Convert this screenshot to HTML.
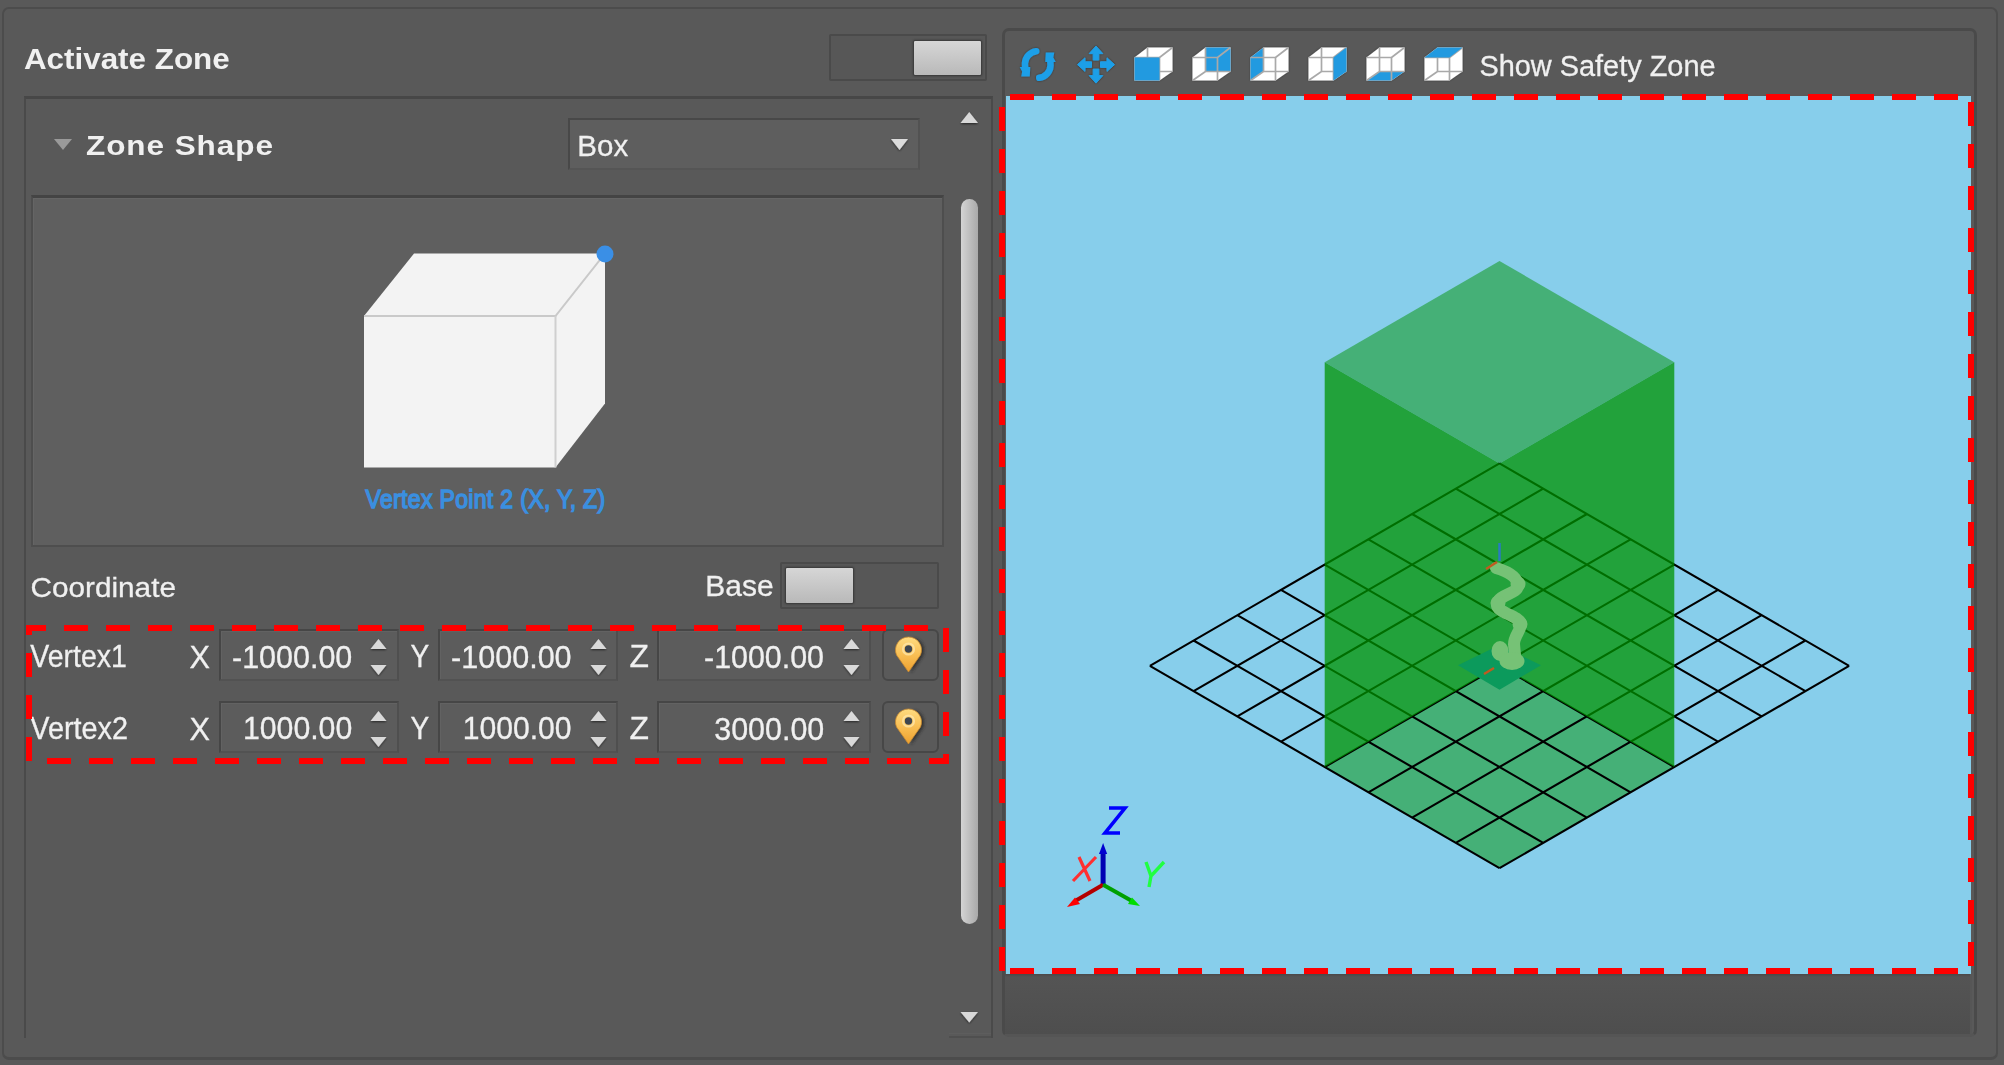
<!DOCTYPE html>
<html><head><meta charset="utf-8">
<style>
*{box-sizing:border-box;margin:0;padding:0}
html,body{width:2004px;height:1065px;overflow:hidden;background:#595959}
body{position:relative;font-family:"Liberation Sans",sans-serif;color:#f2f2f2}
.a{position:absolute}
.t{position:absolute;white-space:nowrap;line-height:1;color:#f0f0f0;-webkit-text-stroke:0.3px #f0f0f0}
.spin{position:absolute;background:#5c5c5c;border:2px solid #464646;border-right-color:#4f4f4f;border-bottom-color:#525252;box-shadow:inset 1px 1px 0 #626262}
.tog{position:absolute;background:#575757;border:2px solid #4a4a4a;border-radius:2px}
.knob{position:absolute;background:linear-gradient(#d6d6d6,#b9b9b9);border:1px solid #3f3f3f;border-radius:2px;box-shadow:0 0 2px #333}
.pinbtn{position:absolute;background:#5a5a5a;border:2px solid #474747;border-radius:6px}
</style></head><body>

<!-- outer groupbox -->
<div class="a" style="left:2px;top:7px;width:1996px;height:1053px;border:2px solid #4c4c4c;border-width:2.5px 2.5px 3px 2.5px;border-radius:7px"></div>

<!-- Activate Zone header -->
<div class="tog" style="left:829px;top:34px;width:158px;height:47px"></div>
<div class="knob" style="left:913px;top:40px;width:69px;height:36px"></div>

<!-- left scroll panel -->
<div class="a" style="left:24px;top:96px;width:969px;height:942px;border:2px solid #4a4a4a;border-top:3px solid #474747;border-bottom:none"></div>

<div class="a" style="left:949px;top:1033px;width:42px;height:5px;border-top:1px solid #5d5d5d;border-bottom:2.5px solid #4f4f4f"></div>
<!-- zone shape row -->
<svg class="a" style="left:0;top:0" width="2004" height="1065">
  <polygon points="54,139 72,139 63,150" fill="#9a9a9a"/>
</svg>
<div class="a" style="left:568px;top:118px;width:352px;height:52px;background:#5e5e5e;border:2px solid #484848;border-right-color:#525252;border-bottom-color:#555"></div>

<!-- image box -->
<div class="a" style="left:31px;top:195px;width:913px;height:352px;background:#5f5f5f;border:2px solid #4e4e4e;border-top:3px solid #444;box-shadow:inset 1px 1px 0 #656565"></div>

<!-- Coordinate row -->
<div class="tog" style="left:780px;top:562px;width:159px;height:47px"></div>
<div class="knob" style="left:785px;top:567px;width:69px;height:37px"></div>

<!-- Vertex rows -->
<div class="spin" style="left:219px;top:629px;width:180px;height:52px"></div>
<div class="spin" style="left:438px;top:629px;width:180px;height:52px"></div>
<div class="spin" style="left:657px;top:629px;width:214px;height:52px"></div>
<div class="pinbtn" style="left:882px;top:629px;width:57px;height:52px"></div>

<div class="spin" style="left:219px;top:701px;width:180px;height:52px"></div>
<div class="spin" style="left:438px;top:701px;width:180px;height:52px"></div>
<div class="spin" style="left:657px;top:701px;width:214px;height:52px"></div>
<div class="pinbtn" style="left:882px;top:701px;width:57px;height:52px"></div>

<!-- right viewport panel -->
<div class="a" style="left:1002px;top:28px;width:975px;height:1009px;border:3px solid #4a4a4a;border-bottom-color:#555;border-radius:7px"></div>
<div class="a" style="left:1005px;top:974px;width:967px;height:60px;background:linear-gradient(#4b4848 0,#545454 3px,#4e4e4e 100%);border-right:2px solid #565656"></div>
<div class="a" style="left:1006px;top:96px;width:965px;height:878px;background:#87ceeb"></div>

<!-- texts -->
<div class="t" style="left:23.92px;top:42.91px;font-size:31.4px;font-weight:bold;-webkit-text-stroke:0;transform-origin:0 26.59px;transform:scaleY(0.955)">Activate Zone</div>
<div class="t" style="left:85.96px;top:128.84px;font-size:31.49px;font-weight:bold;-webkit-text-stroke:0;letter-spacing:0.03em;transform-origin:0 26.66px;transform:scaleY(0.896)">Zone Shape</div>
<div class="t" style="left:577.34px;top:130.81px;font-size:29.51px;transform-origin:0 24.99px;transform:scaleY(1.024)">Box</div>
<div class="t" style="left:1479.4px;top:52.02px;font-size:28.91px;transform-origin:0 24.48px;transform:scaleY(0.99)">Show Safety Zone</div>
<div class="t" style="left:30.41px;top:571.81px;font-size:29.75px;transform-origin:0 25.19px;transform:scaleY(0.953)">Coordinate</div>
<div class="t" style="left:705.3px;top:571.12px;font-size:29.98px;transform-origin:0 25.38px;transform:scaleY(0.955)">Base</div>
<div class="t" style="left:30.36px;top:643.42px;font-size:28.44px;transform-origin:0 24.08px;transform:scaleY(1.118)">Vertex1</div>
<div class="t" style="left:30.36px;top:715.13px;font-size:28.79px;transform-origin:0 24.37px;transform:scaleY(1.089)">Vertex2</div>
<div class="t" style="left:189.53px;top:641.55px;font-size:30.65px;transform-origin:0 25.95px;transform:scaleY(1.028)">X</div>
<div class="t" style="left:410.5px;top:643.74px;font-size:28.06px;transform-origin:0 23.76px;transform:scaleY(1.123)">Y</div>
<div class="t" style="left:629.55px;top:640.56px;font-size:31.82px;transform-origin:0 26.94px;transform:scaleY(0.991)">Z</div>
<div class="t" style="left:189.53px;top:713.55px;font-size:30.65px;transform-origin:0 25.95px;transform:scaleY(1.028)">X</div>
<div class="t" style="left:410.5px;top:715.74px;font-size:28.06px;transform-origin:0 23.76px;transform:scaleY(1.123)">Y</div>
<div class="t" style="left:629.55px;top:712.56px;font-size:31.82px;transform-origin:0 26.94px;transform:scaleY(0.991)">Z</div>
<div class="t" style="left:232.03px;top:641.99px;font-size:30.48px;transform-origin:0 25.81px;transform:scaleY(1.033)">-1000.00</div>
<div class="t" style="left:451.02px;top:641.93px;font-size:30.56px;transform-origin:0 25.87px;transform:scaleY(1.031)">-1000.00</div>
<div class="t" style="left:704.03px;top:642.08px;font-size:30.38px;transform-origin:0 25.72px;transform:scaleY(1.037)">-1000.00</div>
<div class="t" style="left:242.93px;top:714.18px;font-size:30.26px;transform-origin:0 25.62px;transform:scaleY(1.041)">1000.00</div>
<div class="t" style="left:462.74px;top:714.28px;font-size:30.14px;transform-origin:0 25.52px;transform:scaleY(1.045)">1000.00</div>
<div class="t" style="left:714.28px;top:714.03px;font-size:30.44px;transform-origin:0 25.77px;transform:scaleY(1.035)">3000.00</div>
<svg id="gfx" class="a" style="left:0;top:0" width="2004" height="1065">
<polygon points="364,316 414,253.5 605,253.5 605,403.5 555.5,467.5 364,467.5" fill="#f3f3f3"/>
<polyline points="364,316 555.5,316 605,253.5" fill="none" stroke="#c9c9c9" stroke-width="2"/>
<line x1="555.5" y1="316" x2="555.5" y2="467.5" stroke="#cfcfcf" stroke-width="2"/>
<circle cx="605" cy="254" r="8.5" fill="#3a8fe6"/>
<text transform="translate(365.5,507.5) scale(1,1.1)" x="0" y="0" font-family="Liberation Sans" font-size="23" letter-spacing="0.35" fill="#3a8fe0" stroke="#3a8fe0" stroke-width="1.3">Vertex Point 2 (X, Y, Z)</text>
<defs><linearGradient id="thumb" x1="0" x2="1" y1="0" y2="0"><stop offset="0" stop-color="#d4d4d4"/><stop offset="1" stop-color="#a9a9a9"/></linearGradient><linearGradient id="pin" x1="0" x2="0" y1="0" y2="1"><stop offset="0" stop-color="#ffdc80"/><stop offset="0.55" stop-color="#f8bc50"/><stop offset="1" stop-color="#eca030"/></linearGradient></defs>
<rect x="961" y="199" width="17" height="725" rx="8.5" fill="url(#thumb)"/>
<defs><filter id="ash" x="-50%" y="-50%" width="200%" height="200%"><feGaussianBlur in="SourceAlpha" stdDeviation="1"/><feOffset dy="1"/><feComponentTransfer><feFuncA type="linear" slope="0.6"/></feComponentTransfer><feMerge><feMergeNode/><feMergeNode in="SourceGraphic"/></feMerge></filter></defs>
<polygon points="960.5,123 978,123 969.25,112" fill="#d8d8d8" filter="url(#ash)"/>
<polygon points="960.5,1012 978,1012 969.25,1022.5" fill="#d8d8d8" filter="url(#ash)"/>
<polygon points="891,139 908,139 899.5,150" fill="#dcdcdc" filter="url(#ash)"/>
<defs><filter id="blr" x="-50%" y="-50%" width="200%" height="200%"><feGaussianBlur stdDeviation="1.8"/></filter></defs>
<g filter="url(#ash)"><polygon points="370.5,649 386.5,649 378.5,639" fill="#d9d9d9"/><polygon points="370.5,665 386.5,665 378.5,675" fill="#d9d9d9"/></g>
<g filter="url(#ash)"><polygon points="590.5,649 606.5,649 598.5,639" fill="#d9d9d9"/><polygon points="590.5,665 606.5,665 598.5,675" fill="#d9d9d9"/></g>
<g filter="url(#ash)"><polygon points="843.5,649 859.5,649 851.5,639" fill="#d9d9d9"/><polygon points="843.5,665 859.5,665 851.5,675" fill="#d9d9d9"/></g>
<path d="M911.0,673 L923.0,656 A13,13 0 0 0 914.5,638 Z" fill="#222" opacity="0.7" filter="url(#blr)"/>
<path d="M908.5,672 L896.5,655 A13,13 0 1 1 920.5,655 Z" fill="url(#pin)" stroke="#c98a30" stroke-width="0.8"/>
<circle cx="908.5" cy="649" r="5.6" fill="none" stroke="#ffeab0" stroke-width="2" opacity="0.7"/>
<circle cx="908.5" cy="649" r="3.7" fill="#3e4650"/>
<g filter="url(#ash)"><polygon points="370.5,721 386.5,721 378.5,711" fill="#d9d9d9"/><polygon points="370.5,737 386.5,737 378.5,747" fill="#d9d9d9"/></g>
<g filter="url(#ash)"><polygon points="590.5,721 606.5,721 598.5,711" fill="#d9d9d9"/><polygon points="590.5,737 606.5,737 598.5,747" fill="#d9d9d9"/></g>
<g filter="url(#ash)"><polygon points="843.5,721 859.5,721 851.5,711" fill="#d9d9d9"/><polygon points="843.5,737 859.5,737 851.5,747" fill="#d9d9d9"/></g>
<path d="M911.0,745 L923.0,728 A13,13 0 0 0 914.5,710 Z" fill="#222" opacity="0.7" filter="url(#blr)"/>
<path d="M908.5,744 L896.5,727 A13,13 0 1 1 920.5,727 Z" fill="url(#pin)" stroke="#c98a30" stroke-width="0.8"/>
<circle cx="908.5" cy="721" r="5.6" fill="none" stroke="#ffeab0" stroke-width="2" opacity="0.7"/>
<circle cx="908.5" cy="721" r="3.7" fill="#3e4650"/>
<polygon points="1324.7,362.2 1499.5,261.0 1674.3,362.2 1499.5,463.4" fill="#45b077"/>
<polygon points="1324.7,767.0 1499.5,868.2 1674.3,767.0 1499.5,665.8" fill="#45b077"/>
<path d="M1149.9,665.8L1499.5,868.2M1149.9,665.8L1499.5,463.4M1193.6,640.5L1543.2,842.9M1193.6,691.1L1543.2,488.7M1237.3,615.2L1586.9,817.6M1237.3,716.4L1586.9,514.0M1281.0,589.9L1630.6,792.3M1281.0,741.7L1630.6,539.3M1324.7,564.6L1674.3,767.0M1324.7,767.0L1674.3,564.6M1368.4,539.3L1718.0,741.7M1368.4,792.3L1718.0,589.9M1412.1,514.0L1761.7,716.4M1412.1,817.6L1761.7,615.2M1455.8,488.7L1805.4,691.1M1455.8,842.9L1805.4,640.5M1499.5,463.4L1849.1,665.8M1499.5,868.2L1849.1,665.8" stroke="#000" stroke-width="2.1" fill="none"/>
<polygon points="1324.7,362.2 1499.5,463.4 1674.3,362.2 1674.3,767.0 1499.5,665.8 1324.7,767.0" fill="#009300" fill-opacity="0.75"/>
<polygon points="1458,665.3 1499.5,645 1541,665.3 1499.5,689.7" fill="#0c9a5c"/>
<path d="M1496,568 C1506,571 1518,576 1518,586 C1517,594 1499,594 1497,604 C1496,613 1519,615 1521,624 C1521,630 1514,636 1514,644 L1515,655" fill="none" stroke="#76c276" stroke-width="12" stroke-linecap="round" stroke-linejoin="round"/>
<circle cx="1518" cy="584" r="7.5" fill="#76c276"/>
<circle cx="1498" cy="603" r="7.5" fill="#76c276"/>
<circle cx="1520" cy="624" r="7.5" fill="#76c276"/>
<ellipse cx="1500" cy="651" rx="8.5" ry="10" fill="#76c276"/>
<ellipse cx="1512" cy="661" rx="12.5" ry="9" fill="#76c276"/>
<line x1="1499.5" y1="543" x2="1499.5" y2="561" stroke="#2a7ac0" stroke-width="2.5"/>
<line x1="1486" y1="569" x2="1497" y2="562" stroke="#c05a20" stroke-width="2.5"/>
<line x1="1484" y1="674" x2="1494" y2="668" stroke="#c05a20" stroke-width="2.5"/>
<line x1="1103.1" y1="884.7" x2="1103.1" y2="852" stroke="#0000b4" stroke-width="5"/>
<polygon points="1099,854 1107.2,854 1103.1,843" fill="#0000d0"/>
<line x1="1103.1" y1="884.7" x2="1076" y2="900.5" stroke="#b40000" stroke-width="4"/>
<polygon points="1067,907 1075,897.5 1080,904" fill="#ff0000"/>
<line x1="1103.1" y1="884.7" x2="1131" y2="900.5" stroke="#00a000" stroke-width="4"/>
<polygon points="1140,906 1128,904 1132,897.5" fill="#00dd00"/>
<path d="M1109,808 L1125,808 L1105,833 L1120,833" fill="none" stroke="#0000ff" stroke-width="3.6" stroke-linejoin="miter"/>
<path d="M1079,857 L1090,881 M1096,857 L1073,881" fill="none" stroke="#ff3030" stroke-width="3.2"/>
<path d="M1146,862 L1151,876 L1164,862 M1151,876 L1149,887" fill="none" stroke="#20ff40" stroke-width="3.4"/>
<defs><filter id="ish" x="-30%" y="-30%" width="160%" height="160%"><feGaussianBlur in="SourceAlpha" stdDeviation="1.2"/><feComponentTransfer><feFuncA type="linear" slope="0.45"/></feComponentTransfer><feMerge><feMergeNode/><feMergeNode in="SourceGraphic"/></feMerge></filter></defs>
<g filter="url(#ish)"><g transform="rotate(0 1037.75 64.5) translate(1037.75 64.5)"><path d="M-1.5,-13.3 A13,13 0 0 0 -12.8,-1 L-12.6,3" fill="none" stroke="#1e9fe8" stroke-width="6.5" stroke-linecap="round"/><polygon points="-18,2.5 -7.5,2.5 -8,12 -16.5,12 -15.6,7" fill="#1e9fe8"/></g><g transform="rotate(180 1037.75 64.5) translate(1037.75 64.5)"><path d="M-1.5,-13.3 A13,13 0 0 0 -12.8,-1 L-12.6,3" fill="none" stroke="#1e9fe8" stroke-width="6.5" stroke-linecap="round"/><polygon points="-18,2.5 -7.5,2.5 -8,12 -16.5,12 -15.6,7" fill="#1e9fe8"/></g></g>
<g filter="url(#ish)"><path d="M1096,46.099999999999994 l6.8,7.5 h-4 v6.5 h-5.6 v-6.5 h-4 z M1096,83.1 l6.8,-7.5 h-4 v-6.5 h-5.6 v6.5 h-4 z M1077.5,64.6 l7.5,6.8 v-4 h6.5 v-5.6 h-6.5 v-4 z M1114.5,64.6 l-7.5,6.8 v-4 h-6.5 v-5.6 h6.5 v-4 z" fill="#1e9fe8" stroke="#1e9fe8" stroke-width="1" stroke-linejoin="round"/></g>
<polygon points="1134.5,57.5 1147.5,47.5 1172.5,47.5 1172.5,71.5 1159.5,80.5 1134.5,80.5" fill="#ffffff" filter="url(#ish)"/><path d="M1134.5,57.5L1159.5,57.5 M1159.5,57.5L1159.5,80.5 M1147.5,47.5L1147.5,71.5 M1147.5,71.5L1172.5,71.5 M1159.5,57.5L1172.5,47.5 M1134.5,80.5L1147.5,71.5" fill="none" stroke="#a9a9a9" stroke-width="1.7"/><polygon points="1134.5,57.5 1159.5,57.5 1159.5,80.5 1134.5,80.5" fill="#229ae0"/>
<polygon points="1192.5,57.5 1205.5,47.5 1230.5,47.5 1230.5,71.5 1217.5,80.5 1192.5,80.5" fill="#ffffff" filter="url(#ish)"/><polygon points="1205.5,47.5 1230.5,47.5 1230.5,71.5 1205.5,71.5" fill="#229ae0"/><path d="M1192.5,57.5L1217.5,57.5 M1217.5,57.5L1217.5,80.5 M1205.5,47.5L1205.5,71.5 M1205.5,71.5L1230.5,71.5 M1217.5,57.5L1230.5,47.5 M1192.5,80.5L1205.5,71.5" fill="none" stroke="#a9a9a9" stroke-width="1.7"/>
<polygon points="1250.5,57.5 1263.5,47.5 1288.5,47.5 1288.5,71.5 1275.5,80.5 1250.5,80.5" fill="#ffffff" filter="url(#ish)"/><polygon points="1250.5,57.5 1263.5,47.5 1263.5,71.5 1250.5,80.5" fill="#229ae0"/><path d="M1250.5,57.5L1275.5,57.5 M1275.5,57.5L1275.5,80.5 M1263.5,47.5L1263.5,71.5 M1263.5,71.5L1288.5,71.5 M1275.5,57.5L1288.5,47.5 M1250.5,80.5L1263.5,71.5" fill="none" stroke="#a9a9a9" stroke-width="1.7"/>
<polygon points="1308.5,57.5 1321.5,47.5 1346.5,47.5 1346.5,71.5 1333.5,80.5 1308.5,80.5" fill="#ffffff" filter="url(#ish)"/><path d="M1308.5,57.5L1333.5,57.5 M1333.5,57.5L1333.5,80.5 M1321.5,47.5L1321.5,71.5 M1321.5,71.5L1346.5,71.5 M1333.5,57.5L1346.5,47.5 M1308.5,80.5L1321.5,71.5" fill="none" stroke="#a9a9a9" stroke-width="1.7"/><polygon points="1333.5,57.5 1346.5,47.5 1346.5,71.5 1333.5,80.5" fill="#229ae0"/>
<polygon points="1366.5,57.5 1379.5,47.5 1404.5,47.5 1404.5,71.5 1391.5,80.5 1366.5,80.5" fill="#ffffff" filter="url(#ish)"/><polygon points="1366.5,80.5 1391.5,80.5 1404.5,71.5 1379.5,71.5" fill="#229ae0"/><path d="M1366.5,57.5L1391.5,57.5 M1391.5,57.5L1391.5,80.5 M1379.5,47.5L1379.5,71.5 M1379.5,71.5L1404.5,71.5 M1391.5,57.5L1404.5,47.5 M1366.5,80.5L1379.5,71.5" fill="none" stroke="#a9a9a9" stroke-width="1.7"/>
<polygon points="1424.5,57.5 1437.5,47.5 1462.5,47.5 1462.5,71.5 1449.5,80.5 1424.5,80.5" fill="#ffffff" filter="url(#ish)"/><path d="M1424.5,57.5L1449.5,57.5 M1449.5,57.5L1449.5,80.5 M1437.5,47.5L1437.5,71.5 M1437.5,71.5L1462.5,71.5 M1449.5,57.5L1462.5,47.5 M1424.5,80.5L1437.5,71.5" fill="none" stroke="#a9a9a9" stroke-width="1.7"/><polygon points="1424.5,57.5 1449.5,57.5 1462.5,47.5 1437.5,47.5" fill="#229ae0"/>
<rect x="26" y="625" width="20" height="6" fill="#ff0000"/>
<rect x="64" y="625" width="24" height="6" fill="#ff0000"/>
<rect x="106" y="625" width="24" height="6" fill="#ff0000"/>
<rect x="148" y="625" width="24" height="6" fill="#ff0000"/>
<rect x="190" y="625" width="24" height="6" fill="#ff0000"/>
<rect x="232" y="625" width="24" height="6" fill="#ff0000"/>
<rect x="274" y="625" width="24" height="6" fill="#ff0000"/>
<rect x="316" y="625" width="24" height="6" fill="#ff0000"/>
<rect x="358" y="625" width="24" height="6" fill="#ff0000"/>
<rect x="400" y="625" width="24" height="6" fill="#ff0000"/>
<rect x="442" y="625" width="24" height="6" fill="#ff0000"/>
<rect x="484" y="625" width="24" height="6" fill="#ff0000"/>
<rect x="526" y="625" width="24" height="6" fill="#ff0000"/>
<rect x="568" y="625" width="24" height="6" fill="#ff0000"/>
<rect x="610" y="625" width="24" height="6" fill="#ff0000"/>
<rect x="652" y="625" width="24" height="6" fill="#ff0000"/>
<rect x="694" y="625" width="24" height="6" fill="#ff0000"/>
<rect x="736" y="625" width="24" height="6" fill="#ff0000"/>
<rect x="778" y="625" width="24" height="6" fill="#ff0000"/>
<rect x="820" y="625" width="24" height="6" fill="#ff0000"/>
<rect x="862" y="625" width="24" height="6" fill="#ff0000"/>
<rect x="904" y="625" width="24" height="6" fill="#ff0000"/>
<rect x="26" y="625" width="6" height="10" fill="#ff0000"/>
<rect x="26" y="653" width="6" height="24" fill="#ff0000"/>
<rect x="26" y="695" width="6" height="24" fill="#ff0000"/>
<rect x="26" y="737" width="6" height="24" fill="#ff0000"/>
<rect x="943" y="628" width="6" height="24" fill="#ff0000"/>
<rect x="943" y="670" width="6" height="24" fill="#ff0000"/>
<rect x="943" y="712" width="6" height="24" fill="#ff0000"/>
<rect x="943" y="754" width="6" height="10" fill="#ff0000"/>
<rect x="929" y="758" width="20" height="6" fill="#ff0000"/>
<rect x="887" y="758" width="24" height="6" fill="#ff0000"/>
<rect x="845" y="758" width="24" height="6" fill="#ff0000"/>
<rect x="803" y="758" width="24" height="6" fill="#ff0000"/>
<rect x="761" y="758" width="24" height="6" fill="#ff0000"/>
<rect x="719" y="758" width="24" height="6" fill="#ff0000"/>
<rect x="677" y="758" width="24" height="6" fill="#ff0000"/>
<rect x="635" y="758" width="24" height="6" fill="#ff0000"/>
<rect x="593" y="758" width="24" height="6" fill="#ff0000"/>
<rect x="551" y="758" width="24" height="6" fill="#ff0000"/>
<rect x="509" y="758" width="24" height="6" fill="#ff0000"/>
<rect x="467" y="758" width="24" height="6" fill="#ff0000"/>
<rect x="425" y="758" width="24" height="6" fill="#ff0000"/>
<rect x="383" y="758" width="24" height="6" fill="#ff0000"/>
<rect x="341" y="758" width="24" height="6" fill="#ff0000"/>
<rect x="299" y="758" width="24" height="6" fill="#ff0000"/>
<rect x="257" y="758" width="24" height="6" fill="#ff0000"/>
<rect x="215" y="758" width="24" height="6" fill="#ff0000"/>
<rect x="173" y="758" width="24" height="6" fill="#ff0000"/>
<rect x="131" y="758" width="24" height="6" fill="#ff0000"/>
<rect x="89" y="758" width="24" height="6" fill="#ff0000"/>
<rect x="47" y="758" width="24" height="6" fill="#ff0000"/>
<rect x="1010" y="94" width="24" height="6" fill="#ff0000"/>
<rect x="1010" y="968" width="24" height="6" fill="#ff0000"/>
<rect x="1052" y="94" width="24" height="6" fill="#ff0000"/>
<rect x="1052" y="968" width="24" height="6" fill="#ff0000"/>
<rect x="1094" y="94" width="24" height="6" fill="#ff0000"/>
<rect x="1094" y="968" width="24" height="6" fill="#ff0000"/>
<rect x="1136" y="94" width="24" height="6" fill="#ff0000"/>
<rect x="1136" y="968" width="24" height="6" fill="#ff0000"/>
<rect x="1178" y="94" width="24" height="6" fill="#ff0000"/>
<rect x="1178" y="968" width="24" height="6" fill="#ff0000"/>
<rect x="1220" y="94" width="24" height="6" fill="#ff0000"/>
<rect x="1220" y="968" width="24" height="6" fill="#ff0000"/>
<rect x="1262" y="94" width="24" height="6" fill="#ff0000"/>
<rect x="1262" y="968" width="24" height="6" fill="#ff0000"/>
<rect x="1304" y="94" width="24" height="6" fill="#ff0000"/>
<rect x="1304" y="968" width="24" height="6" fill="#ff0000"/>
<rect x="1346" y="94" width="24" height="6" fill="#ff0000"/>
<rect x="1346" y="968" width="24" height="6" fill="#ff0000"/>
<rect x="1388" y="94" width="24" height="6" fill="#ff0000"/>
<rect x="1388" y="968" width="24" height="6" fill="#ff0000"/>
<rect x="1430" y="94" width="24" height="6" fill="#ff0000"/>
<rect x="1430" y="968" width="24" height="6" fill="#ff0000"/>
<rect x="1472" y="94" width="24" height="6" fill="#ff0000"/>
<rect x="1472" y="968" width="24" height="6" fill="#ff0000"/>
<rect x="1514" y="94" width="24" height="6" fill="#ff0000"/>
<rect x="1514" y="968" width="24" height="6" fill="#ff0000"/>
<rect x="1556" y="94" width="24" height="6" fill="#ff0000"/>
<rect x="1556" y="968" width="24" height="6" fill="#ff0000"/>
<rect x="1598" y="94" width="24" height="6" fill="#ff0000"/>
<rect x="1598" y="968" width="24" height="6" fill="#ff0000"/>
<rect x="1640" y="94" width="24" height="6" fill="#ff0000"/>
<rect x="1640" y="968" width="24" height="6" fill="#ff0000"/>
<rect x="1682" y="94" width="24" height="6" fill="#ff0000"/>
<rect x="1682" y="968" width="24" height="6" fill="#ff0000"/>
<rect x="1724" y="94" width="24" height="6" fill="#ff0000"/>
<rect x="1724" y="968" width="24" height="6" fill="#ff0000"/>
<rect x="1766" y="94" width="24" height="6" fill="#ff0000"/>
<rect x="1766" y="968" width="24" height="6" fill="#ff0000"/>
<rect x="1808" y="94" width="24" height="6" fill="#ff0000"/>
<rect x="1808" y="968" width="24" height="6" fill="#ff0000"/>
<rect x="1850" y="94" width="24" height="6" fill="#ff0000"/>
<rect x="1850" y="968" width="24" height="6" fill="#ff0000"/>
<rect x="1892" y="94" width="24" height="6" fill="#ff0000"/>
<rect x="1892" y="968" width="24" height="6" fill="#ff0000"/>
<rect x="1934" y="94" width="24" height="6" fill="#ff0000"/>
<rect x="1934" y="968" width="24" height="6" fill="#ff0000"/>
<rect x="999" y="107" width="6" height="24" fill="#ff0000"/>
<rect x="999" y="149" width="6" height="24" fill="#ff0000"/>
<rect x="999" y="191" width="6" height="24" fill="#ff0000"/>
<rect x="999" y="233" width="6" height="24" fill="#ff0000"/>
<rect x="999" y="275" width="6" height="24" fill="#ff0000"/>
<rect x="999" y="317" width="6" height="24" fill="#ff0000"/>
<rect x="999" y="359" width="6" height="24" fill="#ff0000"/>
<rect x="999" y="401" width="6" height="24" fill="#ff0000"/>
<rect x="999" y="443" width="6" height="24" fill="#ff0000"/>
<rect x="999" y="485" width="6" height="24" fill="#ff0000"/>
<rect x="999" y="527" width="6" height="24" fill="#ff0000"/>
<rect x="999" y="569" width="6" height="24" fill="#ff0000"/>
<rect x="999" y="611" width="6" height="24" fill="#ff0000"/>
<rect x="999" y="653" width="6" height="24" fill="#ff0000"/>
<rect x="999" y="695" width="6" height="24" fill="#ff0000"/>
<rect x="999" y="737" width="6" height="24" fill="#ff0000"/>
<rect x="999" y="779" width="6" height="24" fill="#ff0000"/>
<rect x="999" y="821" width="6" height="24" fill="#ff0000"/>
<rect x="999" y="863" width="6" height="24" fill="#ff0000"/>
<rect x="999" y="905" width="6" height="24" fill="#ff0000"/>
<rect x="999" y="947" width="6" height="24" fill="#ff0000"/>
<rect x="1968" y="102" width="6" height="24" fill="#ff0000"/>
<rect x="1968" y="144" width="6" height="24" fill="#ff0000"/>
<rect x="1968" y="186" width="6" height="24" fill="#ff0000"/>
<rect x="1968" y="228" width="6" height="24" fill="#ff0000"/>
<rect x="1968" y="270" width="6" height="24" fill="#ff0000"/>
<rect x="1968" y="312" width="6" height="24" fill="#ff0000"/>
<rect x="1968" y="354" width="6" height="24" fill="#ff0000"/>
<rect x="1968" y="396" width="6" height="24" fill="#ff0000"/>
<rect x="1968" y="438" width="6" height="24" fill="#ff0000"/>
<rect x="1968" y="480" width="6" height="24" fill="#ff0000"/>
<rect x="1968" y="522" width="6" height="24" fill="#ff0000"/>
<rect x="1968" y="564" width="6" height="24" fill="#ff0000"/>
<rect x="1968" y="606" width="6" height="24" fill="#ff0000"/>
<rect x="1968" y="648" width="6" height="24" fill="#ff0000"/>
<rect x="1968" y="690" width="6" height="24" fill="#ff0000"/>
<rect x="1968" y="732" width="6" height="24" fill="#ff0000"/>
<rect x="1968" y="774" width="6" height="24" fill="#ff0000"/>
<rect x="1968" y="816" width="6" height="24" fill="#ff0000"/>
<rect x="1968" y="858" width="6" height="24" fill="#ff0000"/>
<rect x="1968" y="900" width="6" height="24" fill="#ff0000"/>
<rect x="1968" y="942" width="6" height="24" fill="#ff0000"/>
</svg>
</body></html>
